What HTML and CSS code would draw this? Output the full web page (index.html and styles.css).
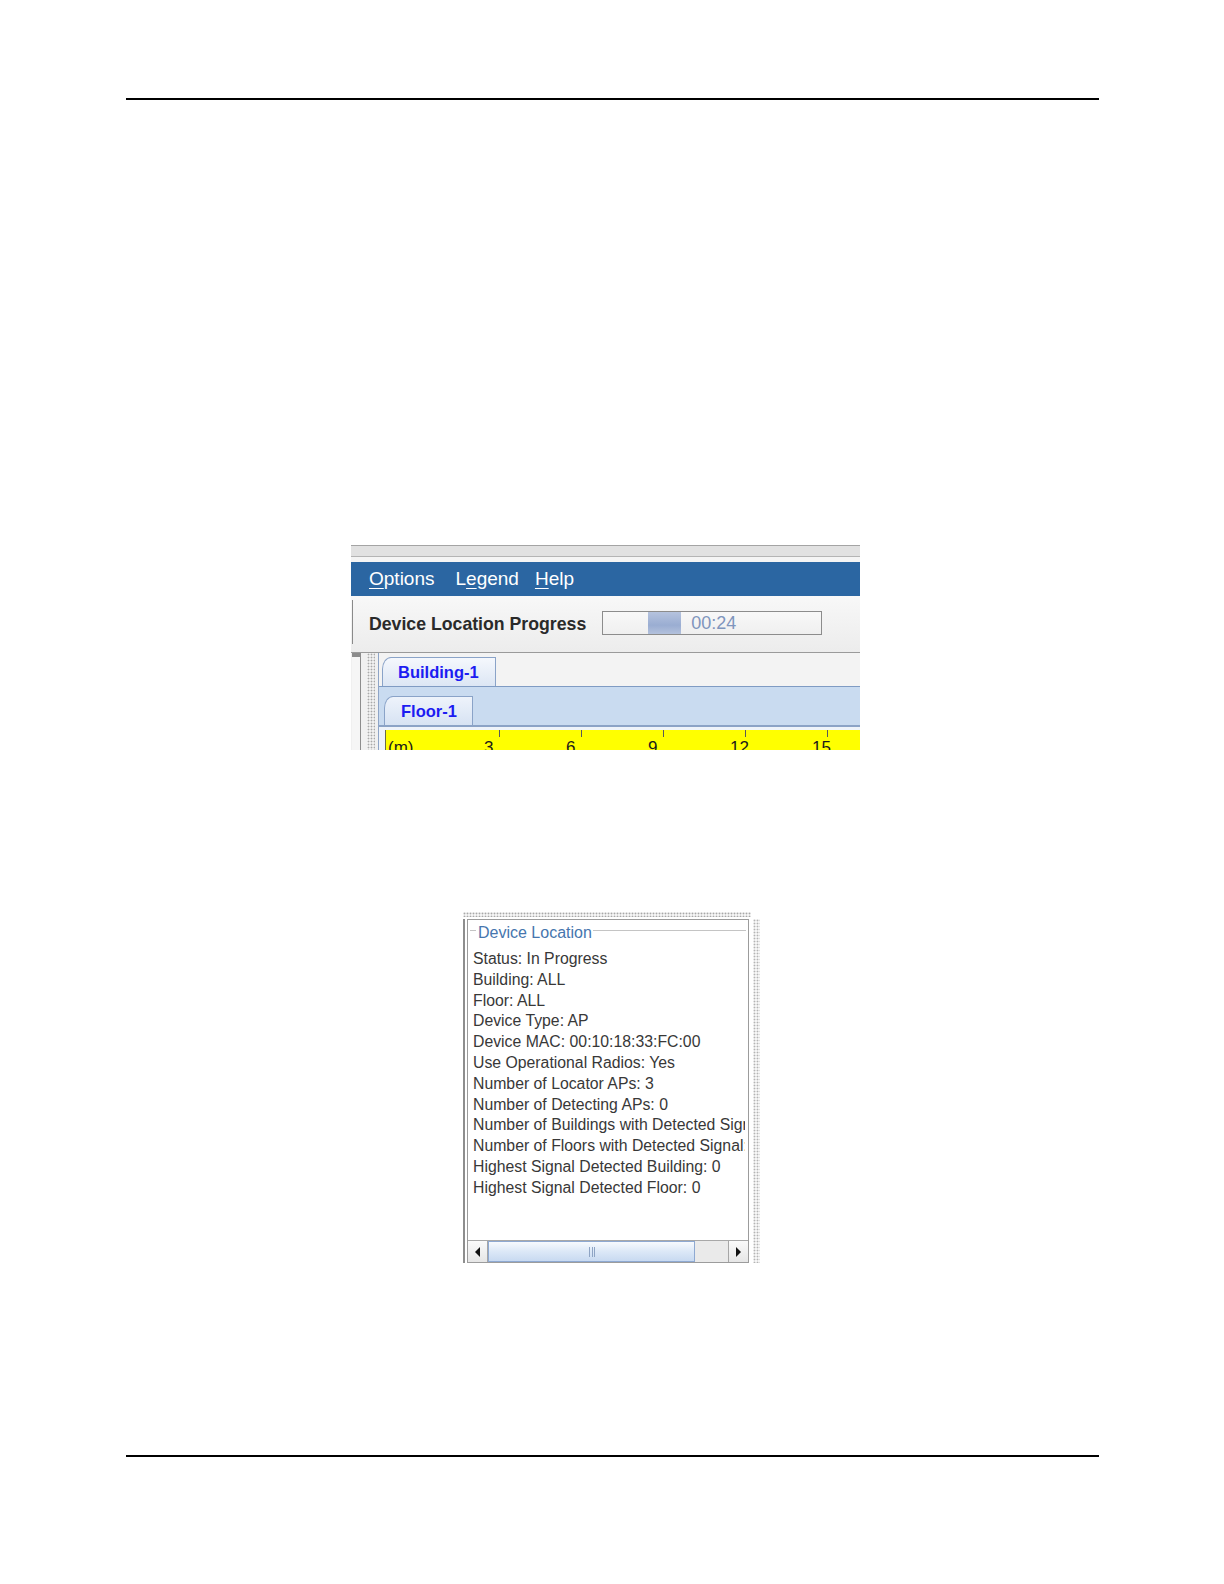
FILE: index.html
```html
<!DOCTYPE html>
<html>
	<head>
		<title>Device Location</title>
		<link rel="stylesheet" href="styles.css">
	</head>

	<body>
		<div class="page">
			<div class="rule rule-top"></div>

			<!-- progress window -->
			<div class="shot1">
				<div class="frame-top"></div>
				<div class="frame-gap"></div>

				<div class="menubar">
					<span class="menu menu-options"><u>O</u>ptions</span>
					<span class="menu menu-legend">L<u>e</u>gend</span>
					<span class="menu"><u>H</u>elp</span>
				</div>

				<div class="progress-row">
					<div class="progress-inner">
						<span class="progress-label">Device Location Progress</span>
						<div class="progress-bar">
							<div class="progress-chunk"></div>
							<span class="progress-time">00:24</span>
						</div>
					</div>
				</div>

				<div class="lower">
					<div class="left-edge"></div>
					<div class="splitter"></div>
					<div class="tabs">
						<div class="tabrow tabrow-building">
							<div class="tab tab-building">Building-1</div>
						</div>
						<div class="tabrow tabrow-floor">
							<div class="tab tab-floor">Floor-1</div>
						</div>
						<div class="ruler">
							<div class="ruler-unit">(m)</div>
							<div class="ruler-cell">3</div>
							<div class="ruler-cell">6</div>
							<div class="ruler-cell">9</div>
							<div class="ruler-cell">12</div>
							<div class="ruler-cell">15</div>
						</div>
					</div>
				</div>
			</div>

			<!-- device location panel -->
			<div class="shot2">
				<div class="dots-top"></div>
				<div class="shot2-body">
					<div class="outer-left"></div>
					<div class="scrollpane">
						<div class="viewport">
							<div class="group-title"><span>Device Location</span></div>
							<div class="info">
								<div>Status: In Progress</div>
								<div>Building: ALL</div>
								<div>Floor: ALL</div>
								<div>Device Type: AP</div>
								<div>Device MAC: 00:10:18:33:FC:00</div>
								<div>Use Operational Radios: Yes</div>
								<div>Number of Locator APs: 3</div>
								<div>Number of Detecting APs: 0</div>
								<div>Number of Buildings with Detected Signal: 0</div>
								<div>Number of Floors with Detected Signal: 0</div>
								<div>Highest Signal Detected Building: 0</div>
								<div>Highest Signal Detected Floor: 0</div>
							</div>
						</div>
						<div class="scrollbar">
							<div class="sb-btn sb-left"><span class="arrow-left"></span></div>
							<div class="sb-thumb"><span class="grip"></span></div>
							<div class="sb-track"></div>
							<div class="sb-btn sb-right"><span class="arrow-right"></span></div>
						</div>
					</div>
					<div class="dots-right"></div>
				</div>
			</div>

			<div class="rule rule-bottom"></div>
		</div>
	</body>
</html>
```

FILE: styles.css
```css
		body {
			margin: 0;
			background: white;
			font-family: "Liberation Sans", Arial, sans-serif;
		}

		.page {
			padding-top: 98px;
			display: flex;
			flex-direction: column;
		}

		.rule {
			margin-left: 126px;
			width: 973px;
			height: 2px;
			background: #000000;
		}

		.rule-bottom {
			margin-top: 192px;
		}

		/* ---- first screenshot ---- */

		.shot1 {
			margin-top: 445px;
			margin-left: 351px;
			width: 509px;
			height: 205px;
			overflow: hidden;
			background: #f0f0f0;
		}

		.frame-top {
			height: 10px;
			background: #e1e1e1;
			border-top: 1px solid #a4a4a4;
			border-bottom: 1px solid #b4b4b4;
		}

		.frame-gap {
			height: 5px;
			background: #f4f4f4;
		}

		.menubar {
			height: 34px;
			background: #2b66a2;
			display: flex;
			align-items: center;
			padding-left: 18px;
			color: white;
			font-size: 19px;
		}

		.menu u {
			text-underline-offset: 3px;
		}

		.menu-options {
			margin-right: 21px;
		}

		.menu-legend {
			margin-right: 16px;
		}

		.progress-row {
			height: 57px;
			padding-top: 4px;
			box-sizing: border-box;
			background: linear-gradient(#f8f8f8, #ececec);
			border-bottom: 1px solid #9a9a9a;
		}

		.progress-inner {
			height: 44px;
			margin-left: 1px;
			border-left: 1px solid #8a8a8a;
			display: flex;
			align-items: center;
			padding-left: 16px;
		}

		.progress-label {
			flex-shrink: 0;
			white-space: nowrap;
			font-size: 17.7px;
			font-weight: bold;
			color: #2a2a2a;
			margin-right: 16px;
			margin-top: 4px;
		}

		.progress-bar {
			flex-shrink: 0;
			width: 173px;
			height: 22px;
			margin-top: 2px;
			border: 1px solid #8c8c8c;
			background: linear-gradient(#f8f8f8, #efefef);
			display: flex;
			align-items: stretch;
			padding-left: 45px;
		}

		.progress-chunk {
			width: 33px;
			background: linear-gradient(#b5c3de, #9aadd2 60%, #b3c1dc);
		}

		.progress-time {
			margin-left: 10px;
			font-size: 18px;
			line-height: 22px;
			color: #7f95bd;
		}

		.lower {
			height: 97px;
			display: flex;
		}

		.left-edge {
			width: 8px;
			margin-left: 1px;
			background: #f6f6f6;
			border-top: 4px solid #8c8c8c;
			border-right: 1px solid #8c8c8c;
		}

		.splitter {
			width: 8px;
			margin: 0 3px 0 6px;
			background-color: #f0f0f0;
			background-image: radial-gradient(circle, #a9a9a9 0.8px, transparent 1.1px);
			background-size: 3px 3px;
		}

		.tabs {
			flex: 1;
			border-left: 1px solid #8ea4c6;
			background: #eef3fa;
		}

		.tabrow {
			display: flex;
			align-items: flex-end;
		}

		.tabrow-building {
			height: 33px;
			background: #f3f3f3;
			border-bottom: 1px solid #7f9bc3;
		}

		.tabrow-floor {
			height: 38px;
			background: #c9dbf0;
			border-bottom: 2px solid #8ba3c6;
		}

		.tab {
			box-sizing: border-box;
			height: 29px;
			border: 1px solid #8aa3c8;
			border-bottom: none;
			border-top-left-radius: 9px 12px;
			color: #1c1cf2;
			font-weight: bold;
			font-size: 16.5px;
			line-height: 28px;
		}

		.tab-building {
			width: 114px;
			margin-left: 3px;
			padding-left: 15px;
			background: linear-gradient(#f5f8fd, #dce6f4);
		}

		.tab-floor {
			width: 89px;
			margin-left: 5px;
			padding-left: 16px;
			background: linear-gradient(#eef3fb, #d7e3f3);
		}

		.ruler {
			margin-top: 3px;
			margin-left: 6px;
			height: 30px;
			background: #ffff00;
			border-left: 1px solid #6b6b4a;
			display: flex;
			font-size: 17px;
			color: #1a1a1a;
			line-height: 17px;
		}

		.ruler-unit {
			width: 30px;
			padding: 9px 0 0 2px;
		}

		.ruler-cell {
			width: 82px;
			box-sizing: border-box;
			padding: 9px 0 0 66px;
			background: linear-gradient(#5a5a5a, #5a5a5a) right top / 1px 7px no-repeat;
		}

		/* ---- second screenshot ---- */

		.shot2 {
			margin-top: 161px;
			margin-left: 463px;
			width: 300px;
			height: 352px;
			overflow: hidden;
			display: flex;
			flex-direction: column;
		}

		.dots-top {
			flex-shrink: 0;
			height: 5px;
			margin: 1px 12px 0 0;
			background-color: #f4f4f4;
			background-image: radial-gradient(circle, #a8a8a8 0.8px, transparent 1.1px);
			background-size: 3px 3px;
		}

		.shot2-body {
			flex: 1;
			display: flex;
			margin-top: 2px;
		}

		.outer-left {
			width: 2px;
			margin-right: 2px;
			background: #8e8e8e;
		}

		.scrollpane {
			width: 282px;
			box-sizing: border-box;
			border: 1px solid #9c9c9c;
			background: white;
			display: flex;
			flex-direction: column;
		}

		.viewport {
			flex: 1;
			overflow: hidden;
			border-bottom: 1px solid #a8a8a8;
			white-space: nowrap;
		}

		.group-title {
			height: 25px;
			margin: 0 2px 0 2px;
			display: flex;
			align-items: center;
			font-size: 16px;
			color: #4676ae;
		}

		.group-title::before {
			content: "";
			width: 6px;
			height: 1px;
			margin-top: -4px;
			background: #c4c4c4;
			margin-right: 2px;
		}

		.group-title::after {
			content: "";
			flex: 1;
			height: 1px;
			margin-top: -4px;
			background: #c4c4c4;
			margin-left: 1px;
		}

		.info {
			margin-top: 4px;
			margin-right: 3px;
			padding-left: 5px;
			font-size: 15.8px;
			line-height: 20.8px;
			color: #383838;
			overflow: hidden;
		}

		.scrollbar {
			flex-shrink: 0;
			height: 21px;
			display: flex;
			background: #ececec;
		}

		.sb-btn {
			width: 19px;
			display: flex;
			align-items: center;
			justify-content: center;
			background: linear-gradient(#fafafa, #e6e6e6);
		}

		.sb-left {
			border-right: 1px solid #a6a6a6;
		}

		.sb-right {
			border-left: 1px solid #a6a6a6;
		}

		.arrow-left {
			width: 0;
			height: 0;
			border-top: 5px solid transparent;
			border-bottom: 5px solid transparent;
			border-right: 5px solid #111;
		}

		.arrow-right {
			width: 0;
			height: 0;
			border-top: 5px solid transparent;
			border-bottom: 5px solid transparent;
			border-left: 5px solid #111;
		}

		.sb-thumb {
			width: 207px;
			box-sizing: border-box;
			border: 1px solid #8ea9d2;
			background: linear-gradient(#f7fafe, #dce8f7 50%, #c8daf1);
			display: flex;
			align-items: center;
			justify-content: center;
		}

		.grip {
			width: 6px;
			height: 10px;
			background: repeating-linear-gradient(90deg, #8ea4c4 0 1px, transparent 1px 2.5px);
		}

		.sb-track {
			flex: 1;
			background: #eaeaea;
		}

		.dots-right {
			width: 7px;
			margin-left: 4px;
			background-color: #f6f6f6;
			background-image: radial-gradient(circle, #b4b4b4 0.8px, transparent 1.1px);
			background-size: 3px 3px;
		}
```
